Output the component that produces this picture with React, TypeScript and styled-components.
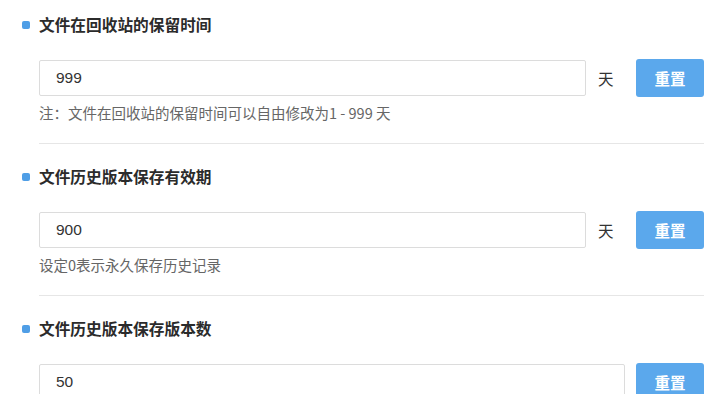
import { createGlobalStyle, styled } from "styled-components"

const GlobalStyle = createGlobalStyle`
  html, body {
    margin: 0;
    padding: 0;
    background: #ffffff;
  }
  body {
    font-family: "Noto Sans CJK SC", "Liberation Sans", sans-serif;
    color: #333333;
  }
`

type Setting = {
  title: string
  value: string
  unit?: string
  note?: string
}

const settings: Setting[] = [
  {
    title: "文件在回收站的保留时间",
    value: "999",
    unit: "天",
    note: "注：文件在回收站的保留时间可以自由修改为1 - 999 天",
  },
  {
    title: "文件历史版本保存有效期",
    value: "900",
    unit: "天",
    note: "设定0表示永久保存历史记录",
  },
  {
    title: "文件历史版本保存版本数",
    value: "50",
  },
]

const App = () => {
  return (
    <>
      <GlobalStyle />
      <Page>
        {settings.map((s) => (
          <Section key={s.title}>
            <TitleRow>
              <Dot />
              <Title>{s.title}</Title>
            </TitleRow>
            <Body>
              <FieldRow>
                <Input defaultValue={s.value} />
                {s.unit ? <Unit>{s.unit}</Unit> : null}
                <ResetButton $spaced={!s.unit}>重置</ResetButton>
              </FieldRow>
              {s.note ? <Note>{s.note}</Note> : null}
            </Body>
          </Section>
        ))}
      </Page>
    </>
  )
}

const Page = styled.div`
  display: flex;
  flex-direction: column;
  padding: 15px 16px 0 22px;
  width: 720px;
  box-sizing: border-box;
  height: 394px;
  overflow: hidden;
`

const Section = styled.section`
  display: flex;
  flex-direction: column;
  padding-top: 23px;

  &:first-child {
    padding-top: 0;
  }
`

const TitleRow = styled.div`
  display: flex;
  align-items: center;
  height: 20px;
  gap: 9px;
`

const Dot = styled.span`
  width: 8px;
  height: 8px;
  border-radius: 2px;
  background: #4f9ee6;
  flex-shrink: 0;
`

const Title = styled.h3`
  margin: 0;
  font-size: 15.7px;
  font-weight: 700;
  line-height: 20px;
  color: #2b2b2b;
`

const Body = styled.div`
  display: flex;
  flex-direction: column;
  margin-left: 17px;
  margin-top: 24px;
  padding-bottom: 20px;
  border-bottom: 1px solid #e6e6e6;
`

const FieldRow = styled.div`
  display: flex;
  align-items: center;
  height: 38px;
`

const Input = styled.input`
  flex: 1;
  min-width: 0;
  height: 36px;
  box-sizing: border-box;
  border: 1px solid #dcdcdc;
  border-radius: 2px;
  padding: 0 16px;
  font-family: "Liberation Sans", "Noto Sans CJK SC", sans-serif;
  font-size: 15.5px;
  color: #333333;
  outline: none;
`

const Unit = styled.span`
  width: 16px;
  margin: 0 22px 0 12px;
  font-size: 15.5px;
  line-height: 20px;
  color: #333333;
`

const ResetButton = styled.button<{ $spaced?: boolean }>`
  width: 68px;
  height: 38px;
  margin-left: ${(p) => (p.$spaced ? "11px" : "0")};
  border: none;
  border-radius: 3px;
  background: #5ba8ec;
  color: #ffffff;
  font-family: "Noto Sans CJK SC", sans-serif;
  font-size: 15.5px;
  font-weight: 700;
  cursor: pointer;
`

const Note = styled.p`
  margin: 6px 0 0;
  font-size: 14.5px;
  line-height: 20px;
  color: #666666;
`

export default App
